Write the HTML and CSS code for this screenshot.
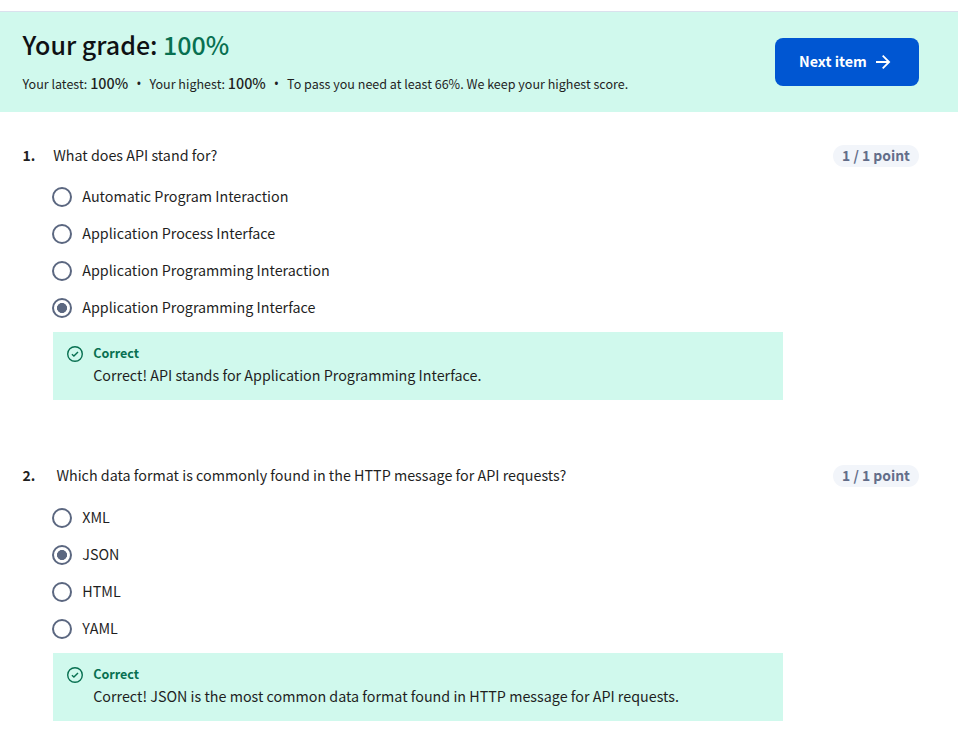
FILE: index.html
```html
<!DOCTYPE html>
<html lang="en">
<head>
<meta charset="utf-8">
<title>Your grade</title>
<link rel="stylesheet" href="styles.css">
</head>
<body>
<header class="banner">
  <div class="summary">
    <h1 class="grade">Your grade: <span class="grade-value">100%</span></h1>
    <div class="details">
      <span class="latest">Your latest: <b>100%</b></span>
      <span class="dot">•</span>
      <span class="highest">Your highest: <b>100%</b></span>
      <span class="dot">•</span>
      <span class="pass">To pass you need at least 66%. We keep your highest score.</span>
    </div>
  </div>
  <button class="next" type="button"><span class="next-label">Next item</span>
    <svg class="arrow" viewBox="0 0 16 16"><path d="M1 8H14.3M7.7 1.6L14.1 8L7.7 14.4"/></svg>
  </button>
</header>
<main class="quiz">
  <section class="question">
    <div class="prompt">
      <span class="number">1.</span>
      <span class="text">What does API stand for?</span>
      <span class="points">1 / 1 point</span>
    </div>
    <div class="options">
      <label class="option"><span class="radio"></span><span class="answer">Automatic Program Interaction</span></label>
      <label class="option"><span class="radio"></span><span class="answer">Application Process Interface</span></label>
      <label class="option"><span class="radio"></span><span class="answer">Application Programming Interaction</span></label>
      <label class="option"><span class="radio selected"></span><span class="answer">Application Programming Interface</span></label>
    </div>
    <div class="feedback">
      <svg class="check" viewBox="0 0 16 16"><circle cx="8" cy="8" r="7.3"/><path d="M4.9 8.3L6.9 10.1L11 5.9"/></svg>
      <div>
        <div class="verdict">Correct</div>
        <div class="explain">Correct! API stands for Application Programming Interface.</div>
      </div>
    </div>
  </section>
  <section class="question second">
    <div class="prompt">
      <span class="number">2.</span>
      <span class="text">Which data format is commonly found in the HTTP message for API requests?</span>
      <span class="points">1 / 1 point</span>
    </div>
    <div class="options">
      <label class="option"><span class="radio"></span><span class="answer">XML</span></label>
      <label class="option"><span class="radio selected"></span><span class="answer">JSON</span></label>
      <label class="option"><span class="radio"></span><span class="answer">HTML</span></label>
      <label class="option"><span class="radio"></span><span class="answer">YAML</span></label>
    </div>
    <div class="feedback">
      <svg class="check" viewBox="0 0 16 16"><circle cx="8" cy="8" r="7.3"/><path d="M4.9 8.3L6.9 10.1L11 5.9"/></svg>
      <div>
        <div class="verdict">Correct</div>
        <div class="explain">Correct! JSON is the most common data format found in HTTP message for API requests.</div>
      </div>
    </div>
  </section>
</main>
</body>
</html>
```
FILE: styles.css
```css
* { box-sizing: border-box; }
body {
  margin: 0;
  padding-top: 11px;
  background: #fff;
  color: #1f1f1f;
  font: 14.32px/24px "Noto Sans CJK SC", "Open Sans", sans-serif;
}
.banner {
  display: flex;
  justify-content: space-between;
  align-items: flex-start;
  height: 101px;
  padding: 26px 39px 0 22.5px;
  border-top: 1px solid #dae1ed;
  background: #d0f9ed;
}
.summary { margin-top: -10px; }
.grade {
  margin: 0;
  font-size: 25px;
  line-height: 32px;
  font-weight: 500;
  color: #0f1114;
}
.grade-value { color: #087051; }
.details {
  display: flex;
  align-items: baseline;
  margin-top: 11px;
  font-size: 12.54px;
  line-height: 24px;
  white-space: nowrap;
}
.details b { font-size: 14.33px; font-weight: 500; }
.dot { width: 21.3px; text-align: center; font-family: "Open Sans", sans-serif; font-size: 14px; }
.next {
  display: flex;
  align-items: center;
  width: 144px;
  height: 48px;
  padding: 0 0 0 24px;
  border: 0;
  border-radius: 8px;
  background: #0056d2;
  color: #fff;
  font: 700 14.3px/22px "Noto Sans CJK SC", "Open Sans", sans-serif;
}
.next-label { width: 76px; padding-bottom: 2px; text-align: left; white-space: nowrap; }
.arrow { width: 16px; height: 16px; fill: none; stroke: #fff; stroke-width: 1.8; }
.quiz { padding: 32px 39px 0 22.5px; }
.question { height: 320px; }
.prompt { display: flex; height: 24px; line-height: 22px; }
.number { width: 30.7px; font-weight: 700; font-size: 14px; }
.second .number { width: 33.9px; }
.text { flex: 1; }
.points {
  width: 86px;
  height: 22px;
  margin-top: 1px;
  border-radius: 11px;
  background: #f2f5fa;
  color: #636d89;
  font-size: 13.9px;
  font-weight: 700;
  line-height: 20px;
  text-align: center;
}
.options { padding: 10px 0 0 29.5px; }
.second .options { padding-top: 11px; }
.option { display: flex; align-items: center; gap: 10.3px; height: 37px; }
.answer { padding-bottom: 2px; }
.radio {
  width: 20px;
  height: 20px;
  border: 2px solid #5b6780;
  border-radius: 50%;
}
.selected { background: radial-gradient(circle, #5b6780 4.7px, transparent 5.3px); }
.feedback {
  display: flex;
  width: 730px;
  height: 68px;
  margin: 6px 0 0 30.5px;
  padding: 10px 0 0 14px;
  background: #d0f9ed;
}
.check { width: 16px; height: 16px; margin: 4px 10.2px 0 0; fill: none; stroke: #087051; stroke-width: 1.4; }
.verdict { color: #087051; font-size: 12.54px; font-weight: 700; line-height: 22px; }
.explain { line-height: 22px; }
```
